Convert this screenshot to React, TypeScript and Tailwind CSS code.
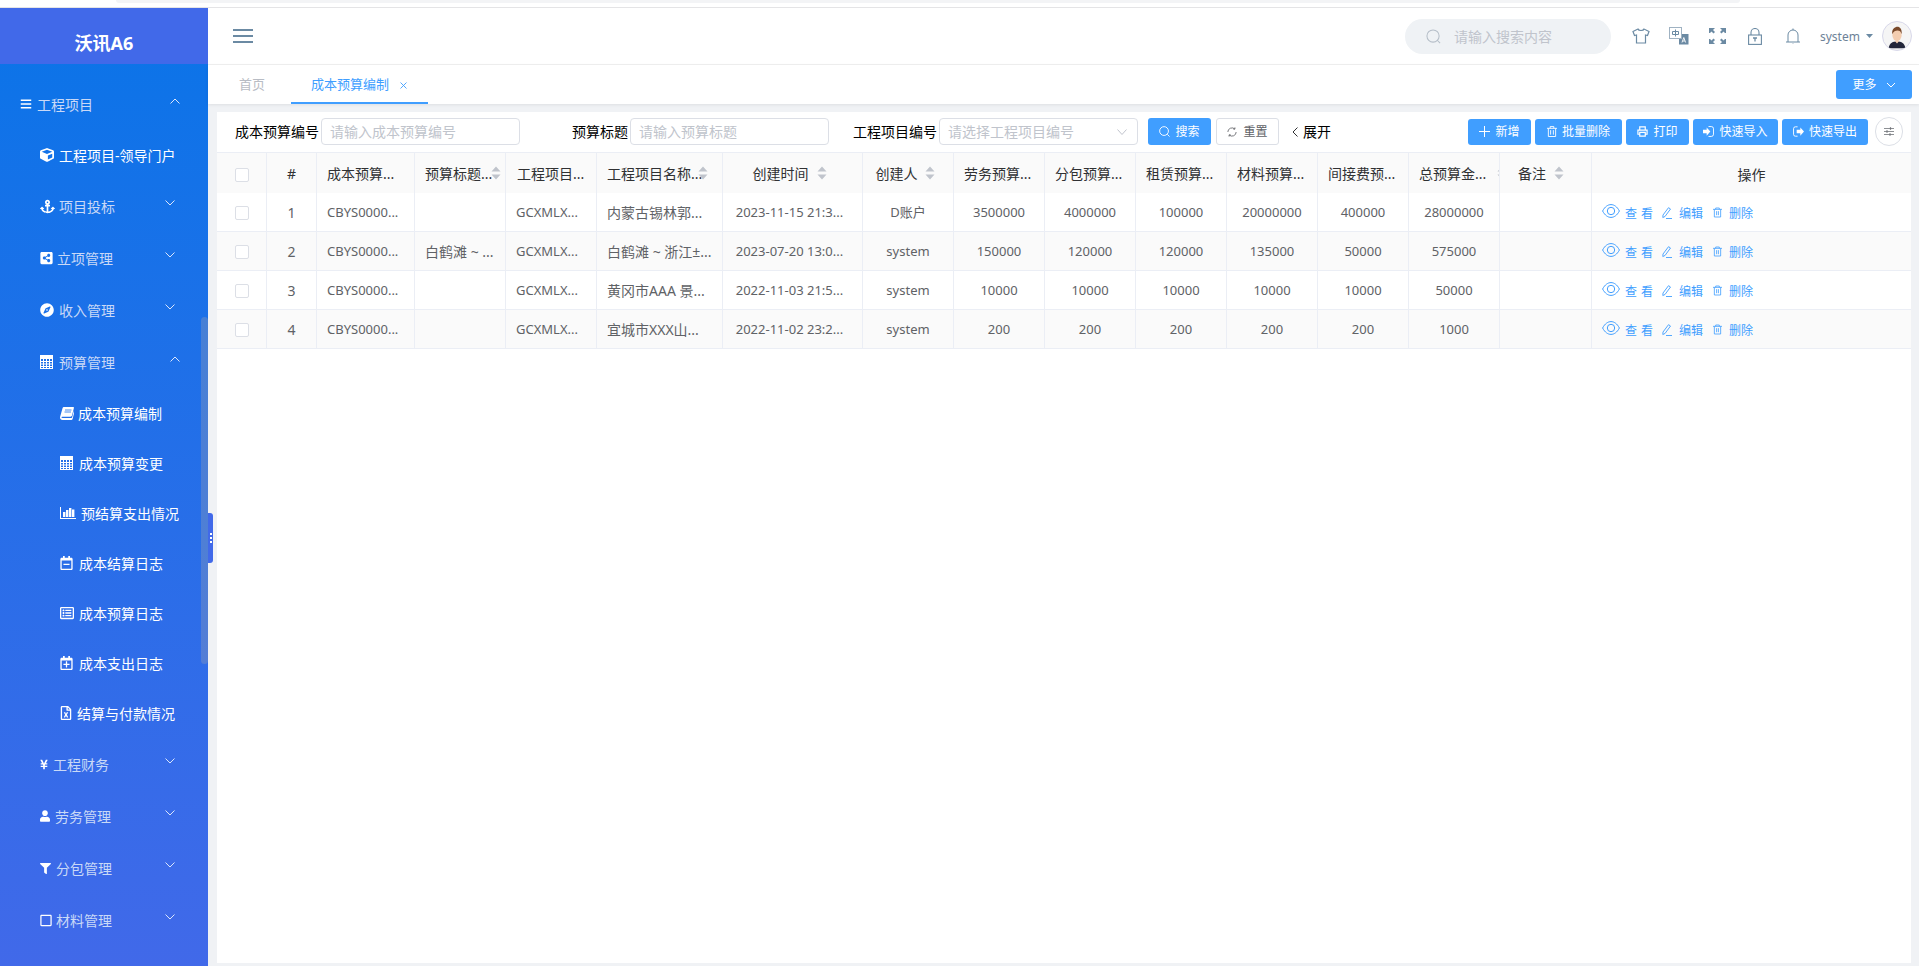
import React from "react";
import {
  FaAnchor, FaBars, FaCompass, FaCube, FaFilter, FaRegCalendarMinus, FaRegCalendarPlus,
  FaRegFileExcel, FaRegListAlt, FaRegSquare, FaShareAltSquare, FaUser, FaYenSign,
} from "react-icons/fa";

const Calc = ({ className = "" }: { className?: string }) => (
  <svg viewBox="0 0 13 14" className={className} fill="none">
    <rect x="0.5" y="0.5" width="12" height="13" stroke="#fff" />
    <rect x="1" y="1" width="11" height="3" fill="#fff" />
    <path d="M1 6.500h11M1 9h11M1 11.500h11M3.500 4v9M6.500 4v9M9.500 4v9" stroke="#fff" strokeWidth="1" />
  </svg>
);
const Bars = ({ className = "" }: { className?: string }) => (
  <svg viewBox="0 0 16 12" className={className} fill="#fff">
    <path d="M0 0h1v11h15v1H0z" />
    <rect x="3" y="5" width="2.400" height="5" />
    <rect x="6" y="3" width="2.400" height="7" />
    <rect x="9" y="1" width="2.400" height="9" />
    <rect x="12" y="2.500" width="2.400" height="7.500" />
  </svg>
);
const Book = ({ className = "" }: { className?: string }) => (
  <svg viewBox="0 0 14 13" className={className} fill="#fff">
    <path d="M3.800 0H13.300c.5 0 .8.400.6 1l-1.900 7.600c-.2.800-.8 1.100-1.500 1.100H2.300c-.8 0-1 .5-.8.9.2.300.6.400 1 .4h8.600c.5 0 .7-.2.900-.6l2-7 .7.400-2.100 8.100c-.2.700-.7 1.100-1.400 1.100H2.500C1 13 0 11.800 0 10.500c0-.4.100-.7.200-1.100L2.600 1C2.800.4 3.200 0 3.800 0z" />
    <path d="M5 3h6.500M4.500 5h6.500" stroke="#1d70e8" strokeWidth="0.800" />
  </svg>
);
const Chevron = ({ up = false, className = "" }: { up?: boolean; className?: string }) => (
  <svg viewBox="0 0 10 6" className={`w-[10px] h-[6px] ${className}`} fill="none" stroke="#dbe6fb" strokeWidth="1">
    <path d={up ? "M0.500 5.500 5 1l4.500 4.500" : "M0.500 0.500 5 5l4.500-4.500"} />
  </svg>
);

type Item = { label: string; icon: React.ReactNode; pad: string; slot: string; text: string; chev?: "up" | "down"; chevPad?: string };
const i1 = "text-white";
const top = "text-[#c9d9f7]";
const sideItems: Item[] = [
  { label: "工程项目", icon: <FaBars className="w-[12px] h-[12px] text-white" />, pad: "pl-[20px]", slot: "w-[17px]", text: top, chev: "up", chevPad: "pr-[28px]" },
  { label: "工程项目-领导门户", icon: <FaCube className="w-[14px] h-[14px] text-white" />, pad: "pl-[40px]", slot: "w-[19px]", text: i1 },
  { label: "项目投标", icon: <FaAnchor className="w-[15px] h-[15px] text-white" />, pad: "pl-[40px]", slot: "w-[19px]", text: top, chev: "down", chevPad: "pr-[33px]" },
  { label: "立项管理", icon: <FaShareAltSquare className="w-[13px] h-[14px] text-white" />, pad: "pl-[40px]", slot: "w-[17px]", text: top, chev: "down", chevPad: "pr-[33px]" },
  { label: "收入管理", icon: <FaCompass className="w-[14px] h-[14px] text-white" />, pad: "pl-[40px]", slot: "w-[19px]", text: top, chev: "down", chevPad: "pr-[33px]" },
  { label: "预算管理", icon: <Calc className="w-[13px] h-[14px]" />, pad: "pl-[40px]", slot: "w-[19px]", text: top, chev: "up", chevPad: "pr-[28px]" },
  { label: "成本预算编制", icon: <Book className="w-[14px] h-[13px]" />, pad: "pl-[60px]", slot: "w-[18px]", text: i1 },
  { label: "成本预算变更", icon: <Calc className="w-[13px] h-[14px]" />, pad: "pl-[60px]", slot: "w-[19px]", text: i1 },
  { label: "预结算支出情况", icon: <Bars className="w-[16px] h-[12px]" />, pad: "pl-[60px]", slot: "w-[21px]", text: i1 },
  { label: "成本结算日志", icon: <FaRegCalendarMinus className="w-[13px] h-[14px] text-white" />, pad: "pl-[60px]", slot: "w-[19px]", text: i1 },
  { label: "成本预算日志", icon: <FaRegListAlt className="w-[14px] h-[14px] text-white" />, pad: "pl-[60px]", slot: "w-[19px]", text: i1 },
  { label: "成本支出日志", icon: <FaRegCalendarPlus className="w-[13px] h-[14px] text-white" />, pad: "pl-[60px]", slot: "w-[19px]", text: i1 },
  { label: "结算与付款情况", icon: <FaRegFileExcel className="w-[12px] h-[14px] text-white" />, pad: "pl-[60px]", slot: "w-[17px]", text: i1 },
  { label: "工程财务", icon: <FaYenSign className="w-[8px] h-[11px] text-white" />, pad: "pl-[40px]", slot: "w-[13px]", text: top, chev: "down", chevPad: "pr-[33px]" },
  { label: "劳务管理", icon: <FaUser className="w-[10px] h-[12px] text-white" />, pad: "pl-[40px]", slot: "w-[15px]", text: top, chev: "down", chevPad: "pr-[33px]" },
  { label: "分包管理", icon: <FaFilter className="w-[11px] h-[11px] text-white" />, pad: "pl-[40px]", slot: "w-[16px]", text: top, chev: "down", chevPad: "pr-[33px]" },
  { label: "材料管理", icon: <FaRegSquare className="w-[12px] h-[13px] text-white" />, pad: "pl-[40px]", slot: "w-[16px]", text: top, chev: "down", chevPad: "pr-[33px]" },
];

const Sort = ({ className = "" }: { className?: string }) => (
  <svg viewBox="0 0 10 14" className={`w-[10px] h-[14px] shrink-0 ${className}`} fill="#c0c4cc">
    <path d="M5 0.500 9.500 5.500h-9zM5 13.500 0.500 8.500h9z" />
  </svg>
);

const Cell = ({ children, center, last, extra = "" }: { children?: React.ReactNode; center?: boolean; last?: boolean; extra?: string }) => (
  <td className={`border-b border-r border-[#ebeef5] overflow-hidden whitespace-nowrap text-[#606266] pt-[1px] ${center ? "text-center" : "text-left pl-[10px]"} ${last ? "border-r-0" : ""} ${extra}`}>
    {children}
  </td>
);
const Check = () => <span className="inline-block align-middle w-[14px] h-[14px] rounded-[2px] border border-[#dcdfe6] bg-white" />;

const rows = [
  { n: 1, title: "", name: "内蒙古锡林郭...", time: "2023-11-15 21:3...", user: "D账户", v: ["3500000", "4000000", "100000", "20000000", "400000", "28000000"] },
  { n: 2, title: "白鹤滩 ~ ...", name: "白鹤滩 ~ 浙江±...", time: "2023-07-20 13:0...", user: "system", v: ["150000", "120000", "120000", "135000", "50000", "575000"] },
  { n: 3, title: "", name: "黄冈市AAA 景...", time: "2022-11-03 21:5...", user: "system", v: ["10000", "10000", "10000", "10000", "10000", "50000"] },
  { n: 4, title: "", name: "宜城市XXX山...", time: "2022-11-02 23:2...", user: "system", v: ["200", "200", "200", "200", "200", "1000"] },
];

const PrimaryBtn = ({ icon, label, w }: { icon: React.ReactNode; label: string; w: string }) => (
  <button className={`h-[26px] ${w} shrink-0 rounded-[3px] bg-[#409eff] text-white text-[12px] flex items-center justify-center gap-[5px]`}>
    {icon}
    <span>{label}</span>
  </button>
);
const Th = ({ children, className = "" }: { children?: React.ReactNode; className?: string }) => (
  <th className={`border-r border-[#ebeef5] bg-[#fafafa] font-normal text-[14px] text-[#303133] overflow-hidden whitespace-nowrap ${className}`}>{children}</th>
);
const HeadFlex = ({ label, center, gap = "ml-[2px]", pad = "pl-[10px]" }: { label: string; center?: boolean; gap?: string; pad?: string }) => (
  <div className={`flex items-center ${center ? "justify-center pr-[6px]" : pad}`}>
    <span>{label}</span>
    <Sort className={gap} />
  </div>
);

const hc = "#6b8aa3";

export default function App() {
  return (
    <div className="w-[1919px] h-[966px] overflow-hidden bg-white flex flex-col text-[14px] font-['Noto_Sans','Noto_Sans_CJK_SC',sans-serif]">
      <div className="h-[8px] shrink-0 border-b border-[#e4e4e6] bg-white pl-[116px]">
        <div className="w-[1624px] h-[3px] bg-[#f3f4f6] rounded-b-[6px]" />
      </div>
      <div className="flex-1 flex min-h-0">
        {/* sidebar */}
        <aside className="relative w-[208px] shrink-0 bg-[linear-gradient(180deg,#0a74e8_0%,#4169e9_100%)] flex flex-col">
          <div className="h-[56px] shrink-0 bg-[#4169e9] flex items-center justify-center text-white font-bold text-[18px] pt-[14px]">沃讯A6</div>
          <nav className="pt-[14px] flex flex-col overflow-hidden">
            {sideItems.map((it, idx) => (
              <div key={idx} className={`flex items-center shrink-0 ${it.chev ? "h-[52px]" : "h-[50px]"} ${it.pad} ${it.chevPad ?? ""}`}>
                <span className={`${it.slot} shrink-0 flex items-center`}>{it.icon}</span>
                <span className={`${it.text} text-[14px] whitespace-nowrap`}>{it.label}</span>
                {it.chev && <Chevron up={it.chev === "up"} className="ml-auto -translate-y-[3px]" />}
              </div>
            ))}
          </nav>
          <div className="absolute right-0 top-[309px] w-[7px] h-[347px] rounded-[4px] bg-[#8a98b8]/40" />
          <div className="absolute left-[208px] top-[505px] w-[5px] h-[50px] rounded-r-[3px] bg-[#4169e9] flex flex-col items-center justify-center gap-[2px] z-10">
            <i className="w-[2px] h-[2px] bg-white" />
            <i className="w-[2px] h-[2px] bg-white" />
            <i className="w-[2px] h-[2px] bg-white" />
          </div>
        </aside>

        {/* main */}
        <main className="flex-1 min-w-0 flex flex-col bg-[#f0f2f5]">
          <header className="h-[57px] shrink-0 bg-white border-b border-[#f0f0f0] flex items-center pl-[25px] pr-[7px]">
            <svg viewBox="0 0 20 14" className="w-[20px] h-[14px]" stroke={hc} strokeWidth="2"><path d="M0 1h20M0 7h20M0 13h20" /></svg>
            <div className="ml-auto w-[206px] h-[35px] rounded-[18px] bg-[#eff2f5] flex items-center pl-[21px] mr-[21px]">
              <svg viewBox="0 0 16 16" className="w-[15px] h-[15px]" fill="none" stroke="#b5bec8" strokeWidth="1.100"><circle cx="7.500" cy="7.500" r="6.500" /><path d="m12 12 3 3" /></svg>
              <span className="ml-[13px] text-[#c0c4cc] text-[14px]">请输入搜索内容</span>
            </div>
            <svg viewBox="0 0 18 16" className="w-[18px] h-[16px]" fill="none" stroke={hc} strokeWidth="1.200"><path d="M6 1 1 3.500l1.500 4L4.500 7v8h9V7l2 .5 1.500-4L12 1c-.5 2-5.500 2-6 0z" /></svg>
            <svg viewBox="0 0 20 18" className="ml-[19px] w-[20px] h-[18px]"><rect x="10" y="7" width="9.500" height="10.500" fill={hc} /><rect x="0.500" y="0.500" width="12" height="11" fill="#fff" stroke="#9fb2c2" /><path d="M6.500 2.500v7M3.500 4.500h6v3h-6z" fill="none" stroke={hc} strokeWidth="1" /><path d="m13 15.500 1.800-5 1.800 5M13.800 14h2" fill="none" stroke="#fff" strokeWidth="0.900" /></svg>
            <svg viewBox="0 0 17 16" className="ml-[20px] w-[17px] h-[16px]" fill={hc}><path d="M0 0h6L4 2l2 2-1.500 1.500-2-2L1 5H0zM17 0h-6l2 2-2 2 1.500 1.500 2-2 1.500 1.500h1zM0 16h6l-2-2 2-2-1.500-1.500-2 2L1 11H0zM17 16h-6l2-2-2-2 1.500-1.500 2 2 1.500-1.500h1z" /></svg>
            <svg viewBox="0 0 14 17" className="ml-[22px] w-[14px] h-[17px]" fill="none" stroke={hc} strokeWidth="1.100"><rect x="0.600" y="7" width="12.800" height="9.400" /><path d="M3 7V4.500a4 4 0 0 1 8 0V7" /><path d="M5 10h4M7 10v3.500" strokeWidth="1.300" /></svg>
            <svg viewBox="0 0 14 16" className="ml-[24px] w-[14px] h-[16px]" fill="none" stroke={hc} strokeWidth="1"><path d="M0 14h14M2 14V7a5 5 0 0 1 10 0v7M7 15.500v.5" /><path d="M7 0.500v1.500" /></svg>
            <span className="ml-[20px] text-[12px] text-[#6d8297] w-[36px] pt-[1px]">system</span>
            <svg viewBox="0 0 7 4" className="ml-[10px] w-[7px] h-[4px]" fill={hc}><path d="M0 0h7L3.500 4z" /></svg>
            <div className="ml-[9px] w-[30px] h-[30px] rounded-full border border-[#d8d8ea] bg-[#f5f5f5] overflow-hidden flex items-center justify-center">
              <svg viewBox="0 0 30 30" className="w-[28px] h-[28px]">
                <path d="M6 28c1-6 5-7 9-7s8 1 9 7z" fill="#23263a" />
                <path d="M12.500 20h5l-2.500 3z" fill="#f3cdb0" />
                <ellipse cx="15" cy="14" rx="5" ry="6.500" fill="#f3cdb0" />
                <path d="M10 13c-1-6 3-8 5.500-8s5 2 4.500 8c-1-3-2-4-4.500-4-2 0-4.500 1-5.500 4z" fill="#7a4a2b" />
              </svg>
            </div>
          </header>
          <div className="h-[39px] shrink-0 bg-white shadow-[0_1px_3px_rgba(0,0,0,0.08)] flex items-center pl-[31px] pr-[7px] relative">
            <span className="text-[#b8bcc4] text-[13px] w-[52px]">首页</span>
            <div className="relative h-full w-[137px] flex items-center pl-[20px] text-[#409eff]">
              <span className="text-[13px]">成本预算编制</span>
              <svg viewBox="0 0 7 7" className="ml-[11px] w-[7px] h-[7px] mt-[2px]" stroke="#409eff" strokeWidth="0.900"><path d="m0.500 0.500 6 6M6.500 0.500l-6 6" /></svg>
              <i className="absolute left-0 right-0 bottom-0 h-[2px] bg-[#409eff]" />
            </div>
            <button className="ml-auto w-[76px] h-[29px] rounded-[3px] bg-[#409eff] text-white text-[12px] flex items-center justify-center gap-[9px]">
              <span>更多</span>
              <svg viewBox="0 0 10 6" className="w-[10px] h-[6px]" fill="none" stroke="#fff"><path d="m1 1 4 4 4-4" /></svg>
            </button>
          </div>

          <section className="flex-1 mt-[8px] mb-[3px] ml-[9px] mr-[8px] bg-white flex flex-col min-h-0">
            <div className="h-[40px] pb-[1px] shrink-0 flex items-center pl-[18px] text-black text-[14px] whitespace-nowrap">
              <span>成本预算编号</span>
              <div className="ml-[2px] w-[199px] h-[27px] rounded-[4px] border border-[#dcdfe6] flex items-center pl-[8px] text-[#c0c4cc]">请输入成本预算编号</div>
              <span className="ml-[52px]">预算标题</span>
              <div className="ml-[2px] w-[199px] h-[27px] rounded-[4px] border border-[#dcdfe6] flex items-center pl-[8px] text-[#c0c4cc]">请输入预算标题</div>
              <span className="ml-[24px]">工程项目编号</span>
              <div className="ml-[2px] w-[199px] h-[27px] rounded-[4px] border border-[#dcdfe6] flex items-center pl-[8px] text-[#c0c4cc]">
                <span>请选择工程项目编号</span>
                <svg viewBox="0 0 10 6" className="ml-auto mr-[10px] w-[10px] h-[6px]" fill="none" stroke="#c0c4cc"><path d="m0.500 0.500 4.500 5 4.500-5" /></svg>
              </div>
              <button className="ml-[10px] w-[63px] h-[27px] rounded-[3px] bg-[#409eff] text-white text-[12px] flex items-center justify-center gap-[5px]">
                <svg viewBox="0 0 12 12" className="w-[11px] h-[11px]" fill="none" stroke="#fff"><circle cx="5.500" cy="5.500" r="4.800" /><path d="m9 9 2.500 2.500" /></svg>
                <span>搜索</span>
              </button>
              <button className="ml-[5px] w-[63px] h-[27px] rounded-[3px] border border-[#dcdfe6] bg-white text-[#606266] text-[12px] flex items-center justify-center gap-[6px]">
                <svg viewBox="0 0 12 12" className="w-[10px] h-[10px]" fill="none" stroke="#606266"><path d="M1 6a5 5 0 0 1 8.500-3.500M11 6a5 5 0 0 1-8.500 3.500" /><path d="M9.500 0.500v2h-2M2.500 11.500v-2h2" /></svg>
                <span>重置</span>
              </button>
              <svg viewBox="0 0 6 10" className="ml-[13px] w-[6px] h-[10px]" fill="none" stroke="#303133"><path d="M5.500 0.500 1 5l4.500 4.500" /></svg>
              <span className="ml-[5px]">展开</span>
              <div className="ml-auto flex items-center gap-[4px] pr-[8px]">
                <PrimaryBtn w="w-[63px]" label="新增" icon={<svg viewBox="0 0 11 11" className="w-[11px] h-[11px]" stroke="#fff"><path d="M5.500 0v11M0 5.500h11" /></svg>} />
                <PrimaryBtn w="w-[87px]" label="批量删除" icon={<svg viewBox="0 0 11 12" className="w-[10px] h-[11px]" fill="none" stroke="#fff"><path d="M0 2.500h11M3.500 2.500V.6h4v1.900M1.500 2.500v9h8v-9M4 4.500v5M7 4.500v5" /></svg>} />
                <PrimaryBtn w="w-[63px]" label="打印" icon={<svg viewBox="0 0 12 12" className="w-[11px] h-[11px]" fill="none" stroke="#fff" strokeWidth="1.300"><path d="M3 4V1h6v3M3 9H1V4.500h10V9H9M3 7h6v4H3z" /></svg>} />
                <PrimaryBtn w="w-[85px]" label="快速导入" icon={<svg viewBox="0 0 12 12" className="w-[11px] h-[11px]" fill="#fff"><path d="M0 4h4V1.500L8 6l-4 4.500V8H0z" /><path d="M6 .6h3a2.500 2.500 0 0 1 2.500 2.500v5.800A2.500 2.500 0 0 1 9 11.400H6" fill="none" stroke="#fff" /></svg>} />
                <PrimaryBtn w="w-[86px]" label="快速导出" icon={<svg viewBox="0 0 12 12" className="w-[11px] h-[11px]" fill="#fff"><path d="M4 4h4V1.500L12 6l-4 4.500V8H4z" /><path d="M5 .9H2.500A2 2 0 0 0 .6 3v6a2 2 0 0 0 1.900 2.100H5" fill="none" stroke="#fff" /></svg>} />
                <button className="ml-[3px] w-[28px] h-[29px] rounded-full border border-[#dcdfe6] bg-white flex items-center justify-center">
                  <svg viewBox="0 0 10 9" className="w-[10px] h-[9px]" fill="none" stroke="#707378" strokeWidth="0.800"><path d="M0 1.500h10M0 4.500h10M0 7.500h10" /><path d="M6.500.3v2.400M3 3.300v2.400M6 6.300v2.400" strokeWidth="1.200" /></svg>
                </button>
              </div>
            </div>

            <table className="table-fixed w-[1694px] border-separate border-spacing-0 border-t border-[#ebeef5] text-[13px]">
              <colgroup>
                {["w-[50px]", "w-[50px]", "w-[98px]", "w-[91px]", "w-[91px]", "w-[126px]", "w-[140px]", "w-[91px]", "w-[91px]", "w-[91px]", "w-[91px]", "w-[91px]", "w-[91px]", "w-[91px]", "w-[92px]", "w-[319px]"].map((c, i) => (
                  <col key={i} className={c} />
                ))}
              </colgroup>
              <thead>
                <tr className="h-[40px]">
                  <Th className="text-center"><Check /></Th>
                  <Th className="text-center text-[12px]">#</Th>
                  <Th className="text-left pl-[10px]">成本预算...</Th>
                  <Th><HeadFlex label="预算标题..." gap="-ml-[1px]" /></Th>
                  <Th className="text-left pl-[11px]">工程项目...</Th>
                  <Th><HeadFlex label="工程项目名称..." gap="-ml-[4px]" /></Th>
                  <Th><HeadFlex label="创建时间" center gap="ml-[8px]" /></Th>
                  <Th><HeadFlex label="创建人" center gap="ml-[7px]" /></Th>
                  <Th className="text-left pl-[10px]">劳务预算...</Th>
                  <Th className="text-left pl-[10px]">分包预算...</Th>
                  <Th className="text-left pl-[10px]">租赁预算...</Th>
                  <Th className="text-left pl-[10px]">材料预算...</Th>
                  <Th className="text-left pl-[10px]">间接费预...</Th>
                  <Th><HeadFlex label="总预算金..." gap="ml-[11px]" /></Th>
                  <Th><HeadFlex label="备注" gap="ml-[8px]" pad="pl-[18px]" /></Th>
                  <th className="bg-[#fafafa] font-normal text-[14px] text-[#303133] text-center pt-[2px]">操作</th>
                </tr>
              </thead>
              <tbody>
                {rows.map((r) => (
                  <tr key={r.n} className={`h-[39px] ${r.n % 2 === 0 ? "bg-[#fafafa]" : "bg-white"}`}>
                    <Cell center><Check /></Cell>
                    <Cell center><span className="text-[14px]">{r.n}</span></Cell>
                    <Cell>CBYS0000...</Cell>
                    <Cell><span className="text-[14px]">{r.title}</span></Cell>
                    <Cell>GCXMLX...</Cell>
                    <Cell><span className="text-[14px]">{r.name}</span></Cell>
                    <Cell center extra="pr-[6px]">{r.time}</Cell>
                    <Cell center>{r.user}</Cell>
                    {r.v.map((x, i) => (
                      <Cell key={i} center>{x}</Cell>
                    ))}
                    <Cell />
                    <Cell last>
                      <div className="flex items-center text-[#409eff] text-[12px]">
                        <svg viewBox="0 0 18 14" className="w-[18px] h-[14px] -translate-y-[2px]" fill="none" stroke="#409eff"><path d="M0.600 7C3 2.500 6 .6 9 .6s6 1.900 8.400 6.400C15 11.500 12 13.400 9 13.400S3 11.500.600 7z" /><circle cx="9" cy="7" r="3.700" /></svg>
                        <span className="ml-[5px] tracking-[4px] w-[32px] translate-y-[1px]">查看</span>
                        <svg viewBox="0 0 10 12" className="ml-[5px] w-[10px] h-[12px]" fill="none" stroke="#409eff" strokeWidth="0.900"><path d="M6.500 0.700 8.500 2 3 9.500.800 10.500 1 8zM4 11.500h6" /></svg>
                        <span className="ml-[7px] w-[24px] translate-y-[1px]">编辑</span>
                        <svg viewBox="0 0 10 11" className="ml-[10px] w-[9px] h-[11px]" fill="none" stroke="#409eff" strokeWidth="0.900"><path d="M0 2h10M3 2V.5h4V2M1.500 2v8.500h7V2M4 4v4.500M6 4v4.500" /></svg>
                        <span className="ml-[7px] translate-y-[1px]">删除</span>
                      </div>
                    </Cell>
                  </tr>
                ))}
              </tbody>
            </table>
          </section>
        </main>
      </div>
    </div>
  );
}
